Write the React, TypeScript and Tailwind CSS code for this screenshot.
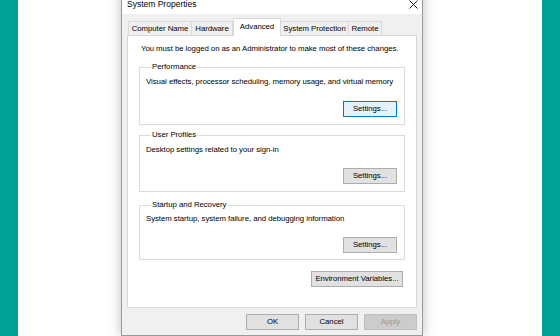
import React from "react";

const font = { fontFamily: '"Liberation Sans", Arial, sans-serif' };

function Btn({ label, w = "w-[54px]", variant = "normal" }: { label: string; w?: string; variant?: "normal" | "focus" | "disabled" }) {
  const cls =
    variant === "focus"
      ? "bg-[#e5f1fb] border-[#0078d7] text-black"
      : variant === "disabled"
      ? "bg-[#cccccc] border-[#bfbfbf] text-[#9a9a9a]"
      : "bg-[#e1e1e1] border-[#adadad] text-black";
  return (
    <div className={`${w} h-[16px] border ${cls} flex items-center justify-center text-[7.8px] leading-[10px] tracking-[-0.05px]`}>
      {label}
    </div>
  );
}

function Group({
  title,
  desc,
  mt,
  pt,
  gap,
  pb,
}: {
  title: string;
  desc: string;
  mt: string;
  pt: string;
  gap: string;
  pb: string;
}) {
  return (
    <fieldset className={`${mt} mx-[11px] border border-[#dcdcdc] px-[6px] ${pb} flex flex-col`}>
      <legend className="ml-[5px] px-[1px] text-[7.8px] leading-[10px] tracking-[-0.05px] text-black">{title}</legend>
      <div className={`${pt} text-[7.8px] leading-[10px] tracking-[-0.05px] text-black whitespace-nowrap`}>{desc}</div>
      <div className={`${gap} flex justify-end pr-[1px]`}>
        <Btn label="Settings..." variant={title === "Performance" ? "focus" : "normal"} />
      </div>
    </fieldset>
  );
}

export default function App() {
  const tabs = [
    { t: "Computer Name", w: "w-[64px]" },
    { t: "Hardware", w: "w-[42px]" },
    { t: "Advanced", w: "w-[48px]", sel: true },
    { t: "System Protection", w: "w-[69px]" },
    { t: "Remote", w: "w-[34px]" },
  ];
  return (
    <div className="w-[560px] h-[336px] bg-[#00a096] px-[18px] overflow-hidden" style={font}>
      <div className="bg-white h-full overflow-hidden">
        <div className="ml-[103px] mt-[-9px] w-[302px] border border-[#9a9a9a] bg-[#f0f0f0] shadow-[0_0_12px_rgba(0,0,0,0.25)]">
          {/* title bar */}
          <div className="h-[22px] bg-white flex items-center justify-between pl-[5px] pr-[4px] pt-[2px]">
            <span className="text-[8.5px] leading-[10px] text-black">System Properties</span>
            <svg width="9" height="9" viewBox="0 0 9 9">
              <path d="M0.5 0.5 L8.5 8.5 M8.5 0.5 L0.5 8.5" stroke="#000" strokeWidth="0.9" fill="none" />
            </svg>
          </div>
          {/* body */}
          <div className="px-[5px] pb-[5px]">
            {/* tabs */}
            <div className="h-[21px] flex items-end pl-[1px] relative z-10">
              {tabs.map((tab) =>
                tab.sel ? (
                  <div
                    key={tab.t}
                    className={`${tab.w} h-[18px] mb-[-1px] bg-white border border-b-0 border-[#d9d9d9] flex items-center justify-center text-[7.8px] leading-[10px] tracking-[-0.05px] text-black pb-[2px]`}
                  >
                    {tab.t}
                  </div>
                ) : (
                  <div
                    key={tab.t}
                    className={`${tab.w} h-[14px] bg-[#f0f0f0] border border-b-0 border-[#d9d9d9] -ml-px first:ml-0 flex items-center justify-center text-[7.8px] leading-[10px] tracking-[-0.05px] text-black`}
                  >
                    {tab.t}
                  </div>
                )
              )}
            </div>
            {/* panel */}
            <div className="h-[273px] bg-white border border-[#d9d9d9] flex flex-col">
              <div className="pt-[8px] pl-[13px] text-[7.8px] leading-[10px] tracking-[-0.05px] text-black whitespace-nowrap">
                You must be logged on as an Administrator to make most of these changes.
              </div>
              <Group
                title="Performance"
                desc="Visual effects, processor scheduling, memory usage, and virtual memory"
                mt="mt-[8px]"
                pt="pt-[5px]"
                gap="mt-[14px]"
                pb="pb-[7px]"
              />
              <Group
                title="User Profiles"
                desc="Desktop settings related to your sign-in"
                mt="mt-[5px]"
                pt="pt-[5px]"
                gap="mt-[13px]"
                pb="pb-[7px]"
              />
              <Group
                title="Startup and Recovery"
                desc="System startup, system failure, and debugging information"
                mt="mt-[8px]"
                pt="pt-[4px]"
                gap="mt-[13px]"
                pb="pb-[6px]"
              />
              <div className="mt-[11px] flex justify-end pr-[13px]">
                <Btn label="Environment Variables..." w="w-[92px]" />
              </div>
            </div>
            {/* bottom buttons */}
            <div className="mt-[6px] flex justify-end gap-[6px] pr-[0px]">
              <Btn label="OK" w="w-[53px]" />
              <Btn label="Cancel" w="w-[53px]" />
              <Btn label="Apply" w="w-[53px]" variant="disabled" />
            </div>
          </div>
        </div>
      </div>
    </div>
  );
}
